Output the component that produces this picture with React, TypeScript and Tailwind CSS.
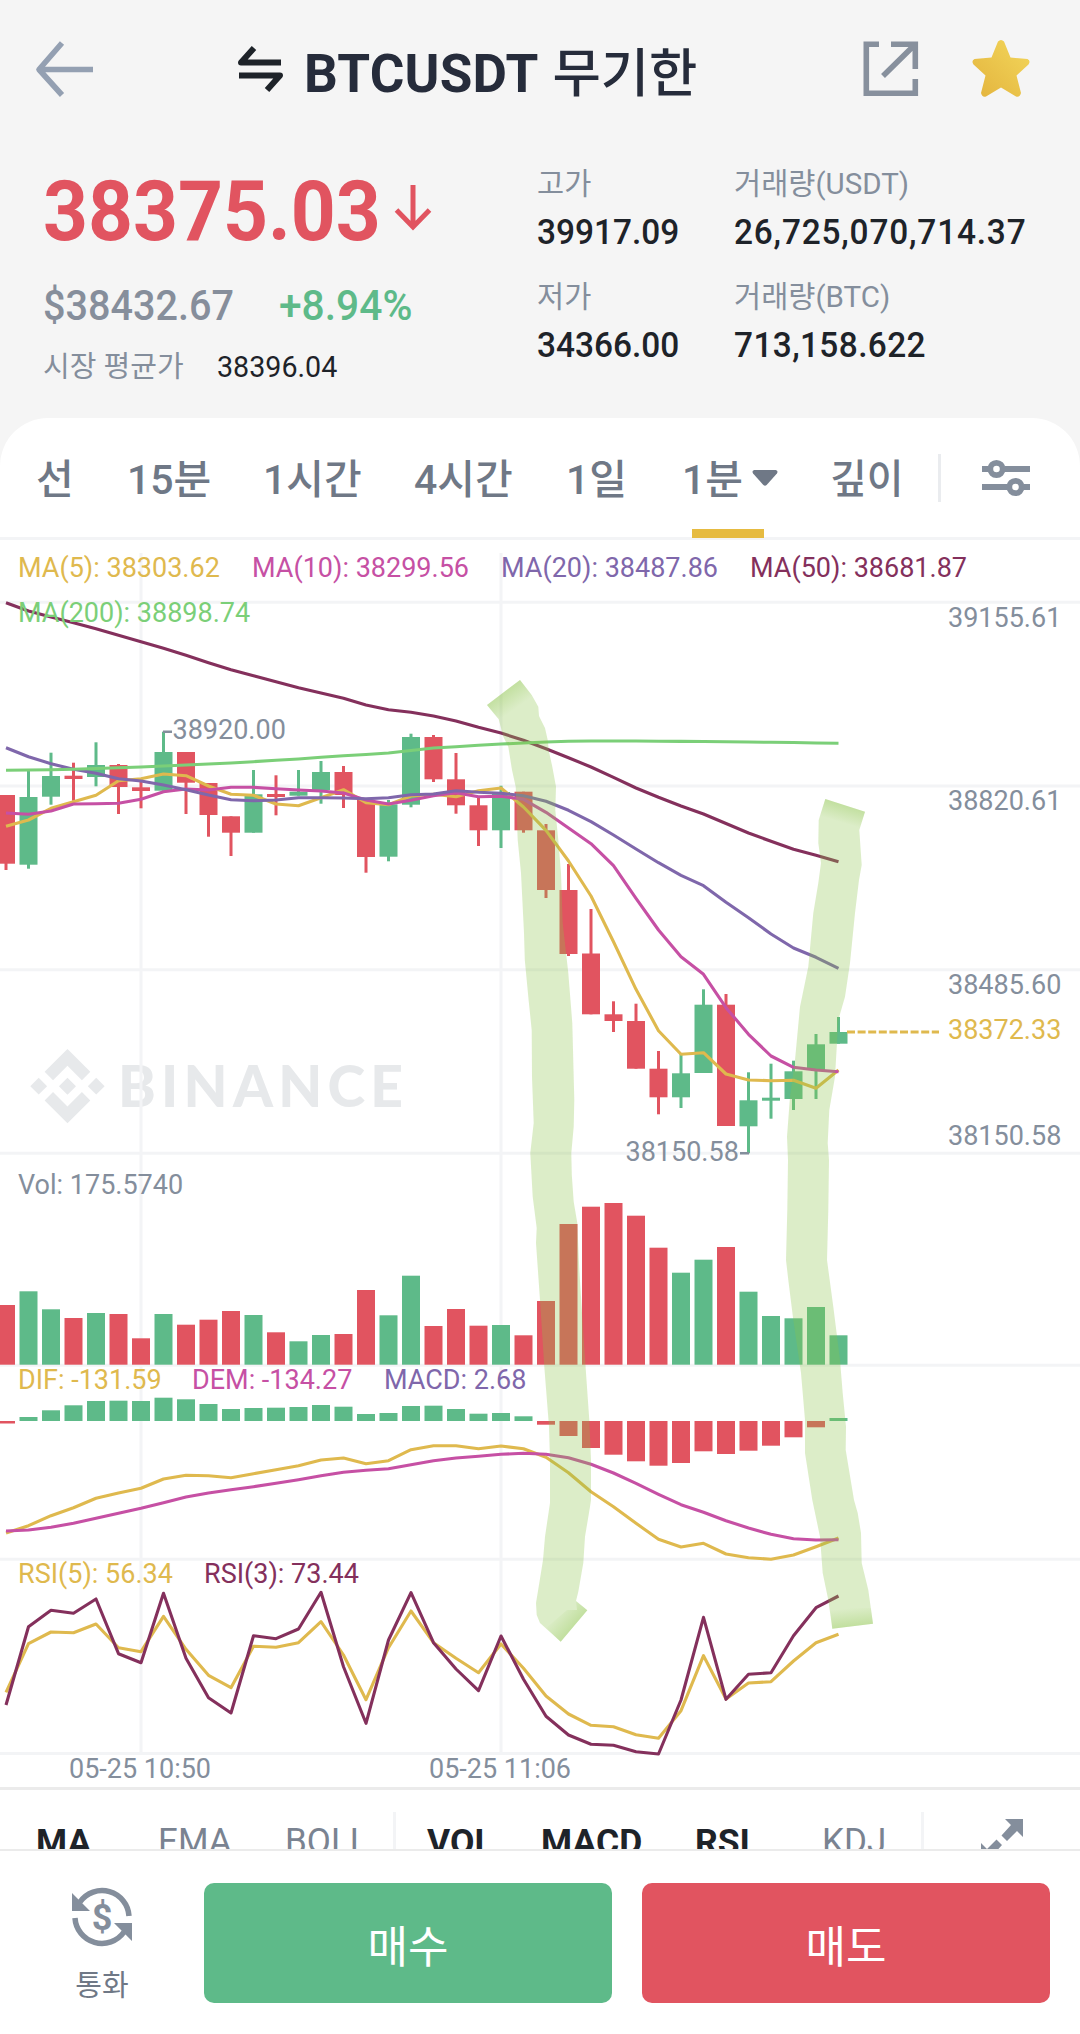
import React from "react";

const RED = "#e15460";
const GREEN = "#5eba89";
const GOLD = "#dfb94e";
const PINK = "#c650a4";
const PURPLE = "#7f67ab";
const MAROON = "#84305c";
const LIME = "#7bcf78";
const GREY = "#848e9c";
const GRID = "#f3f4f6";

const cx = (i: number) => 6 + 22.5 * i;

// [up?, body top, body bottom, wick top, wick bottom]
const candles: number[][] = [
  [0, 795, 863.7, 795, 870], [1, 797, 864.7, 770.7, 868.7], [1, 776, 796.7, 752.7, 804.7], [0, 775.7, 779, 762.7, 800.7],
  [1, 765, 777, 742.3, 786.3], [0, 765, 787, 764, 814], [0, 787.3, 791, 780, 808.3], [1, 752, 790.7, 731.7, 790.7],
  [0, 752, 782.7, 752, 814], [0, 783, 815, 783, 836.7], [0, 816.3, 832.7, 816.3, 856], [1, 794.3, 832.7, 770, 832.7],
  [0, 794, 797, 775.3, 815.3], [1, 791.7, 795.7, 770, 795.7], [1, 772, 790, 761, 803.7], [0, 772, 795, 766, 808],
  [0, 800, 857, 800, 872.7], [1, 804.3, 856.7, 800, 861.3], [1, 737, 804.7, 733.7, 807.3], [0, 737, 779.3, 735, 782],
  [0, 779.3, 805.3, 753, 813.7], [0, 805.3, 830.3, 798, 846], [1, 792, 830.3, 785.7, 848], [0, 791.7, 830.3, 791.7, 832.7],
  [0, 830.3, 890, 824, 898], [0, 890, 954, 864, 956], [0, 953.5, 1014.3, 909, 1014.3], [0, 1014.3, 1021, 1001.3, 1032],
  [0, 1021, 1068.7, 1003.7, 1068.7], [0, 1068.7, 1097.3, 1051, 1114.3], [1, 1073.3, 1097.3, 1053.3, 1108], [1, 1004.7, 1073, 989.3, 1073],
  [0, 1004.7, 1126, 994, 1126], [1, 1100.3, 1126.3, 1072.3, 1153.3], [1, 1097.7, 1100.7, 1063.7, 1118.7], [1, 1071.3, 1099, 1060.7, 1110],
  [1, 1044.3, 1070, 1034, 1099], [1, 1032, 1043.7, 1017, 1043.7],
];

const volumeTops = [
  1305, 1291.3, 1309.3, 1318, 1313, 1314, 1338.3, 1314, 1324.7, 1319.7, 1311, 1315, 1332.3, 1341.3, 1335, 1334, 1290, 1315.3, 1275.7,
  1326, 1309, 1325.7, 1325, 1335.3, 1301, 1224, 1206.7, 1203, 1215.7, 1247.7, 1272.7, 1259.7, 1247, 1291.7, 1316, 1318.3, 1307, 1335.3,
];

const macdEnds = [
  1423.5, 1417, 1410.3, 1405.3, 1401, 1400.7, 1401, 1397.7, 1399.3, 1404, 1409, 1408, 1407.7, 1407, 1405, 1406.7, 1414, 1413, 1406,
  1405.7, 1409, 1413.7, 1413, 1416.3, 1424.7, 1436, 1448, 1454.7, 1461.3, 1465.7, 1463, 1451.3, 1454, 1450.7, 1445.7, 1437.3, 1427.3, 1418,
];

const ma5 = [
  826.3, 820, 808.3, 801.7, 795.3, 780.7, 778.7, 774, 775.7, 786, 794.3, 795.3, 804, 805.7, 797.7, 789.7, 802.7, 804.7, 796, 794.3, 796.7,
  790.7, 788, 807, 830.3, 861, 896, 941.7, 989.3, 1030.7, 1054.3, 1052.7, 1074, 1080, 1080.7, 1080.3, 1088.3, 1070,
];
const ma10 = [
  813, 814.3, 811, 804, 803.7, 803.3, 799.3, 791.7, 789, 790, 787.3, 787.3, 788.7, 790, 791, 793, 800, 804, 800.3, 795.7, 792.7, 796.7,
  796.3, 799.3, 812.3, 828, 843.7, 865.7, 898.3, 930, 956.7, 974.3, 1007.7, 1034.3, 1056, 1067.3, 1070, 1071.7,
];
const ma20 = [
  747.7, 756.7, 763.7, 769.3, 773.3, 778.7, 781, 785, 789.7, 795, 799.7, 800.7, 800, 797.7, 797.7, 798, 798.7, 797.7, 794.7, 794, 790.7,
  792.3, 793.3, 795.7, 801.3, 810.3, 821.7, 835, 849, 862.7, 875.3, 885.7, 902.3, 917.7, 934, 948, 957.3, 968.3,
];
const ma50 = [
  602.7, 611, 617, 622.7, 628.7, 635.3, 641.7, 648.3, 655.3, 662.7, 669.7, 675.7, 681.7, 687.7, 693, 698.3, 705, 709.7, 712.3, 716, 721,
  727.3, 733, 740.3, 748.7, 757.7, 767, 777.3, 788, 797.3, 806, 814, 823.5, 833, 841.3, 849.3, 855.3, 861.7,
];
const ma200 = [
  770.3, 770, 769.7, 769.3, 768.5, 767.7, 767, 766, 765, 764, 763, 761.7, 760.3, 759, 757.3, 755.7, 754.5, 753, 750.5, 748, 746.7, 745.3,
  744, 743, 742, 741.3, 741, 741, 741, 741.3, 741.4, 741.5, 741.7, 742, 742.3, 742.5, 743, 743.2,
];
const dif = [
  1533, 1525.7, 1515.7, 1507.7, 1498.3, 1493, 1488.3, 1479, 1475.3, 1475.7, 1477.7, 1473.7, 1469.7, 1465.7, 1460, 1458, 1463.7, 1460.7,
  1449.7, 1445.7, 1445.7, 1448.7, 1446, 1448.7, 1457.3, 1472.7, 1491.7, 1506.7, 1523.3, 1539.3, 1547, 1543.3, 1554, 1557.7, 1559.3, 1555,
  1546.7, 1538,
];
const dem = [
  1531, 1530, 1527.3, 1523.3, 1518.3, 1513.3, 1508.3, 1502.7, 1497, 1493, 1489.7, 1486.7, 1483.3, 1479.7, 1475.7, 1472.3, 1470.3, 1468.7,
  1464.7, 1460.7, 1458, 1456.3, 1454.3, 1453.3, 1454.3, 1457.7, 1464.3, 1473, 1483.3, 1494.3, 1504.7, 1512.3, 1520.7, 1528, 1534.3, 1538.7,
  1540, 1539.7,
];
const rsi5 = [
  1692.3, 1643.7, 1632, 1632.7, 1624, 1647.7, 1651.7, 1616.3, 1649.3, 1675.3, 1687.7, 1646.3, 1647.3, 1642.7, 1621.7, 1655, 1699.7, 1647.7,
  1611, 1642.7, 1658.3, 1672.7, 1644, 1668.3, 1696, 1714, 1725.3, 1726.7, 1734.7, 1738.3, 1710.7, 1655.7, 1699, 1683, 1681.7, 1661, 1642.7,
  1634.3,
];
const rsi3 = [
  1705, 1626.7, 1610.3, 1613.3, 1599, 1653.7, 1662.7, 1593.3, 1658.3, 1697.7, 1713, 1635.7, 1638.7, 1629, 1592.3, 1666.7, 1723.3, 1640,
  1592.7, 1642.7, 1669, 1690.7, 1636, 1679.3, 1716.3, 1735, 1744.3, 1745.3, 1751.7, 1754, 1700, 1617.3, 1699.3, 1674.3, 1672.7, 1635.7,
  1607.7, 1596,
];

function Line({ ys, color }: { ys: number[]; color: string }) {
  return (
    <polyline
      points={ys.map((y, i) => `${cx(i)},${y}`).join(" ")}
      fill="none"
      stroke={color}
      strokeWidth="3.1"
      strokeLinejoin="round"
    />
  );
}

const leftBand =
  "520,680 531.7,695 538.3,706.7 539,716 545,728 547.7,740 549,751.7 552.3,766.7 556,786.7 555.3,810 558.3,840 561,873 562.7,923 568.3,973 572.3,1023 574.3,1100 573.7,1126.7 571.3,1153.3 571.8,1175 573.7,1201.7 577.3,1223 579.3,1270 583.3,1333 586,1373 589.3,1420 591,1460 591,1500 590,1506.7 585,1536.7 583.3,1563 578.3,1591.7 576,1601 587.3,1610.3 560.7,1641.7 540,1623 536.7,1615 536,1603 539.3,1583 543,1560 545,1536.7 550,1503 550,1460 549,1426.7 544.3,1366.7 540,1300 536,1243 536.7,1228 532.7,1196.7 530.3,1153 533.7,1123 532,1077 531.7,1030 528.6,1000 524.8,960 524,933 521,873 517.7,840 515.7,786.7 512,770 508.3,746.7 503.3,736.7 498.7,719.3 487,705";
const rightBand =
  "825.3,799 865,811.7 859.3,830 861.7,865 859,880 855,913 850,963 845,996.7 838.3,1020 835,1076.7 829.3,1110 827.7,1143 829,1160 828.3,1210 827,1260 833.3,1306.7 840,1360 842.7,1393 846,1426.7 845.7,1450 854,1500 857.7,1513 861,1533 861.7,1563 868.3,1590 873,1623.7 832.3,1628.7 828.3,1600 822.7,1573 820,1536.7 812.3,1500 805,1453 805,1420 801,1373 793.3,1320 788.3,1280 786,1260 787.3,1210 788,1160 787,1136.7 790,1096.7 795,1060 800,1006.7 808.3,966.7 813.3,913 818.3,883 821,863 818.3,843 818.7,820";

function T({ x, y, c, children, a = "start" }: { x: number; y: number; c: string; children: string; a?: "start" | "middle" }) {
  return (
    <text x={x} y={y} fill={c} fontSize="27" textAnchor={a}>
      {children}
    </text>
  );
}

function TipGradient({ id, x1, y1, x2, y2 }: { id: string; x1: number; y1: number; x2: number; y2: number }) {
  return (
    <linearGradient id={id} gradientUnits="userSpaceOnUse" x1={x1} y1={y1} x2={x2} y2={y2}>
      <stop offset="0" stopColor="#8bc34a" stopOpacity="0.32" />
      <stop offset="1" stopColor="#8bc34a" stopOpacity="0" />
    </linearGradient>
  );
}

function Chart() {
  return (
    <svg width="1080" height="1247" viewBox="0 540 1080 1247" className="block font-['Roboto',sans-serif]">
      <defs>
        <TipGradient id="tipA" x1={503} y1={692} x2={515} y2={709} />
        <TipGradient id="tipB" x1={574} y1={1626} x2={558} y2={1612} />
        <TipGradient id="tipC" x1={845} y1={805} x2={840} y2={822} />
        <TipGradient id="tipD" x1={853} y1={1626} x2={851} y2={1608} />
      </defs>
      <g fill="#e7e9eb">
        <path
          transform="translate(30.3 1049) scale(0.587)"
          d="M38.73 53.2l24.59-24.58 24.6 24.6 14.3-14.31L63.32 0l-38.9 38.9zM0 63.31l14.3-14.31 14.31 14.31-14.31 14.3zM38.73 73.41l24.59 24.59 24.6-24.6 14.31 14.29-38.9 38.91-38.91-38.88zM98 63.31l14.3-14.31 14.31 14.3-14.31 14.32zM77.83 63.3L63.32 48.78 48.81 63.28l14.51 14.5z"
        />
        <text x="118" y="1106.7" fontSize="57" fontWeight="900" textLength="285" lengthAdjust="spacing" className="font-['Lato',sans-serif]">
          BINANCE
        </text>
      </g>
      <g stroke={GRID} strokeWidth="3">
        {[602.3, 786, 969.7, 1153.3, 1365.3, 1559.3, 1753.5].map((y) => (
          <line key={y} x1="0" x2="1080" y1={y} y2={y} />
        ))}
        <line x1="141" x2="141" y1="553" y2="1753" />
        <line x1="501" x2="501" y1="553" y2="1753" />
      </g>

      {candles.map(([up, t, b, wt, wb], i) => (
        <g key={i} fill={up ? GREEN : RED}>
          <rect x={cx(i) - 9} y={t} width="18" height={b - t} />
          <rect x={cx(i) - 1.5} y={wt} width="3" height={wb - wt} />
          <rect x={cx(i) - 9} y={volumeTops[i]} width="18" height={1364.7 - volumeTops[i]} />
        </g>
      ))}
      {macdEnds.map((e, i) => (
        <rect key={i} x={cx(i) - 9} y={Math.min(e, 1421)} width="18" height={Math.abs(e - 1421)} fill={e < 1421 ? GREEN : RED} />
      ))}

      <Line ys={ma5} color={GOLD} />
      <Line ys={ma10} color={PINK} />
      <Line ys={ma20} color={PURPLE} />
      <Line ys={ma50} color={MAROON} />
      <Line ys={ma200} color={LIME} />
      <Line ys={dif} color={GOLD} />
      <Line ys={dem} color={PINK} />
      <Line ys={rsi5} color={GOLD} />
      <Line ys={rsi3} color={MAROON} />

      <T x={18} y={577} c={GOLD}>MA(5): 38303.62</T>
      <T x={252} y={577} c={PINK}>MA(10): 38299.56</T>
      <T x={501} y={577} c={PURPLE}>MA(20): 38487.86</T>
      <T x={750} y={577} c={MAROON}>MA(50): 38681.87</T>
      <T x={18} y={621.7} c={LIME}>MA(200): 38898.74</T>
      <T x={948} y={626.7} c={GREY}>39155.61</T>
      <T x={948} y={810} c={GREY}>38820.61</T>
      <T x={948} y={993.7} c={GREY}>38485.60</T>
      <T x={948} y={1038.7} c={GOLD}>38372.33</T>
      <T x={948} y={1144.5} c={GREY}>38150.58</T>
      <T x={172.5} y={738.7} c={GREY}>38920.00</T>
      <T x={625.5} y={1160.7} c={GREY}>38150.58</T>
      <path d="M163 731.7h9M740 1153.3h9" stroke={GREY} strokeWidth="2.6" />
      <path d="M847 1032h92" stroke={GOLD} strokeWidth="2.8" strokeDasharray="8 2.6" />
      <T x={18} y={1194} c={GREY}>Vol: 175.5740</T>
      <T x={18} y={1388.7} c={GOLD}>DIF: -131.59</T>
      <T x={192} y={1388.7} c={PINK}>DEM: -134.27</T>
      <T x={384} y={1388.7} c={PURPLE}>MACD: 2.68</T>
      <T x={18} y={1582.7} c={GOLD}>RSI(5): 56.34</T>
      <T x={204} y={1582.7} c={MAROON}>RSI(3): 73.44</T>
      <T x={140} y={1777.5} c={GREY} a="middle">05-25 10:50</T>
      <T x={500} y={1777.5} c={GREY} a="middle">05-25 11:06</T>

      <g fill="#8bc34a" fillOpacity="0.3">
        <polygon points={leftBand} />
        <polygon points={rightBand} />
      </g>
      <polygon points="520,680 531.7,695 538,706 498.7,719.3 487,705" fill="url(#tipA)" />
      <polygon points="576,1601 587.3,1610.3 560.7,1641.7 546,1628 567,1610 577,1610" fill="url(#tipB)" />
      <polygon points="825.3,799 865,811.7 859.3,830 818.7,820" fill="url(#tipC)" />
      <polygon points="830,1608 871,1608 873,1623.7 832.3,1628.7" fill="url(#tipD)" />
    </svg>
  );
}

function Stat({ label, value, tracking = "" }: { label: string; value: string; tracking?: string }) {
  return (
    <div className="whitespace-nowrap">
      <div className="h-[40px] text-[29.5px] leading-[40px] text-[#848e9c]">{label}</div>
      <div className={`mt-[7px] h-[44px] origin-left scale-x-[.955] text-[35px] leading-[44px] font-medium text-[#1e2329] ${tracking}`}>
        {value}
      </div>
    </div>
  );
}

function Header() {
  return (
    <header className="h-[418px] w-full shrink-0">
      <div className="flex h-[140px] items-center pr-[49px] pl-[34px]">
        <svg width="62" height="60" viewBox="34 40 62 60" fill="none" stroke="#94a0b2" strokeWidth="5.6">
          <path d="M93 69.5H39M62 43L39 69.5L62 95" strokeLinejoin="round" />
        </svg>
        <svg width="50" height="50" viewBox="235 44 50 50" className="ml-[139px] shrink-0" fill="none" stroke="#1e2329" strokeWidth="6">
          <path d="M281 61.5H241L254 47" strokeLinejoin="round" />
          <path d="M239 74.5H280L267 89" strokeLinejoin="round" />
        </svg>
        <h1 className="mt-[10px] ml-[19px] flex w-[440px] items-baseline whitespace-nowrap text-[#262c3b]">
          <span className="text-[53px] font-bold tracking-[0.200px]">BTCUSDT</span>
          <span className="ml-[14px] text-[52.5px] font-medium">무기한</span>
        </h1>
        <svg width="56" height="56" viewBox="0 0 56 56" className="-mt-[2px] ml-auto" fill="none" stroke="#87909d" strokeWidth="5.6">
          <path d="M16 3.3H3.3V52.3H52.3V38M28 3.3H52.3V28M50 5.5L20 35" />
        </svg>
        <svg width="60" height="60" viewBox="0 0 60 60" className="-mt-[3px] ml-[52px]">
          <defs>
            <linearGradient id="star" x1="0" y1="1" x2="1" y2="0">
              <stop offset="0" stopColor="#e3b33d" />
              <stop offset="1" stopColor="#f3d75b" />
            </linearGradient>
          </defs>
          <path
            d="M27 2.500Q30 -.5 33 2.500L39.500 18.500L56.500 20Q60 22 57.500 25.500L45.500 36.500L50 54Q49 58.500 45 57.500L30 48.500L15 57.500Q11 58.500 10 54L14.500 36.500L2.500 25.500Q0 22 3.500 20L20.500 18.500Z"
            fill="url(#star)"
          />
        </svg>
      </div>
      <div className="flex pl-[43px]">
        <div className="w-[494px] whitespace-nowrap">
          <div className="mt-[22px] flex h-[100px] items-center">
            <span className="w-[351px] origin-left scale-x-[.945] text-[83px] leading-[100px] font-bold text-[#e15460]">38375.03</span>
            <svg width="38" height="46" viewBox="0 0 38 46" className="-mt-[8px]" fill="none" stroke="#e15460" strokeWidth="5">
              <path d="M19 0V41M2.500 25L19 42L35.500 25" />
            </svg>
          </div>
          <div className="mt-[19px] flex h-[50px] items-center text-[42px] leading-[50px] font-medium">
            <span className="w-[236px] origin-left scale-x-[.942] text-[#868e9b]">$38432.67</span>
            <span className="origin-left scale-x-[.97] text-[#5eba89]">+8.94%</span>
          </div>
          <div className="mt-[14px] flex h-[44px] items-center leading-[44px]">
            <span className="w-[174px] text-[29px] text-[#848e9c]">시장 평균가</span>
            <span className="origin-left scale-x-[.955] text-[30px] text-[#1e2329]">38396.04</span>
          </div>
        </div>
        <div className="mt-[24px] grid grid-cols-[197px_auto] content-start gap-y-[22px]">
          <Stat label="고가" value="39917.09" />
          <Stat label="거래량(USDT)" value="26,725,070,714.37" tracking="tracking-[0.850px]" />
          <Stat label="저가" value="34366.00" />
          <Stat label="거래량(BTC)" value="713,158.622" tracking="tracking-[0.400px]" />
        </div>
      </div>
    </header>
  );
}

function Tabs() {
  return (
    <nav className="relative flex h-[122px] shrink-0 items-center border-b-[3px] border-[#f3f4f6] pt-[3px] pl-[36px] text-[41px] leading-[50px] font-medium whitespace-nowrap text-[#6f7886]">
      <span className="w-[91px] pt-[2px]">선</span>
      <span className="w-[136px] pt-[2px]">15분</span>
      <span className="w-[151px] pt-[2px]">1시간</span>
      <span className="w-[152px] pt-[2px]">4시간</span>
      <span className="w-[116px] pt-[2px]">1일</span>
      <span className="w-[70px] pt-[2px]">1분</span>
      <svg width="26" height="18" viewBox="0 0 24 18" preserveAspectRatio="none" fill="#6f7886" className="-mt-[2px]">
        <path d="M2 1H22Q24.500 2 23 4.500L13.500 16Q12 17.500 10.500 16L1 4.500Q-.5 2 2 1Z" />
      </svg>
      <span className="ml-[52px] w-[108px] pt-[2px] text-[40px]">깊이</span>
      <div className="-mt-[3px] h-[48px] w-[3px] bg-[#eaecef]" />
      <svg width="50" height="40" viewBox="0 0 50 40" className="-mt-[3px] ml-[40px]" fill="none" stroke="#848e9c" strokeWidth="5.800">
        <path d="M1 11H7M24 11H49M1 29H26M43 29H49" />
        <circle cx="15.500" cy="11" r="6.200" />
        <circle cx="34.500" cy="29" r="6.200" />
      </svg>
      <div className="absolute -bottom-[1px] left-[692px] h-[9px] w-[72px] bg-[#e6bb41]" />
    </nav>
  );
}

function Indicators() {
  return (
    <div className="h-[62px] shrink-0 overflow-hidden border-t-[3px] border-[#ebebeb] text-[35px] leading-[42px] whitespace-nowrap text-[#7a8391]">
      <div className="flex h-[103px] items-center pl-[36px]">
        <span className="w-[122px] text-[35.500px] font-bold text-[#1e2329]">MA</span>
        <span className="w-[127px]">EMA</span>
        <span className="w-[108px]">BOLL</span>
        <div className="h-[60px] w-[3px] bg-[#f3f4f6]" />
        <span className="ml-[31px] w-[114px] text-[35.500px] font-bold text-[#1e2329]">VOL</span>
        <span className="w-[154px] text-[35.500px] font-bold text-[#1e2329]">MACD</span>
        <span className="w-[127px] text-[35.500px] font-bold text-[#1e2329]">RSI</span>
        <span className="w-[99px]">KDJ</span>
        <div className="h-[60px] w-[3px] bg-[#f3f4f6]" />
        <svg width="44" height="44" viewBox="0 0 44 44" className="-mt-[4px] ml-[56px]" fill="#848e9c">
          <path d="M25 1H43V19L37 13L27 23L21.500 17.500L31 7ZM19 43H1V25L7 31L16.500 21.500L22 27L13 37Z" />
        </svg>
      </div>
    </div>
  );
}

function BottomBar() {
  return (
    <footer className="flex h-[185px] shrink-0 border-t-[2px] border-[#ebebeb] bg-white">
      <div className="flex w-[204px] flex-col items-center pt-[34px]">
        <svg width="64" height="64" viewBox="0 0 64 64" fill="none" stroke="#848e9c" strokeWidth="5.500">
          <path d="M10 17A27 27 0 0 1 59 31" />
          <path d="M5 33A27 27 0 0 0 54 47" />
          <path d="M2 8V26H20L13.500 19.500L8 14ZM62 56V38H44L50.500 44.500L56 50Z" fill="#848e9c" stroke="none" />
          <text x="32" y="45" fontSize="36" fontWeight="700" textAnchor="middle" fill="#848e9c" stroke="none">
            $
          </text>
        </svg>
        <span className="mt-[17px] text-[29px] leading-[40px] text-[#6f7886]">통화</span>
      </div>
      <button className="mt-[32px] h-[120px] w-[408px] rounded-[10px] bg-[#5eba89] pt-[10px] text-[44px] text-white">매수</button>
      <button className="mt-[32px] ml-[30px] h-[120px] w-[408px] rounded-[10px] bg-[#e15460] pt-[10px] text-[44px] text-white">매도</button>
    </footer>
  );
}

export default function App() {
  return (
    <div className="flex h-[2034px] w-[1080px] flex-col overflow-hidden bg-[#f5f5f5] font-['Roboto','Noto_Sans_CJK_KR',sans-serif]">
      <Header />
      <main className="flex w-full shrink-0 flex-col rounded-t-[48px] bg-white">
        <Tabs />
        <Chart />
        <Indicators />
        <BottomBar />
      </main>
    </div>
  );
}
